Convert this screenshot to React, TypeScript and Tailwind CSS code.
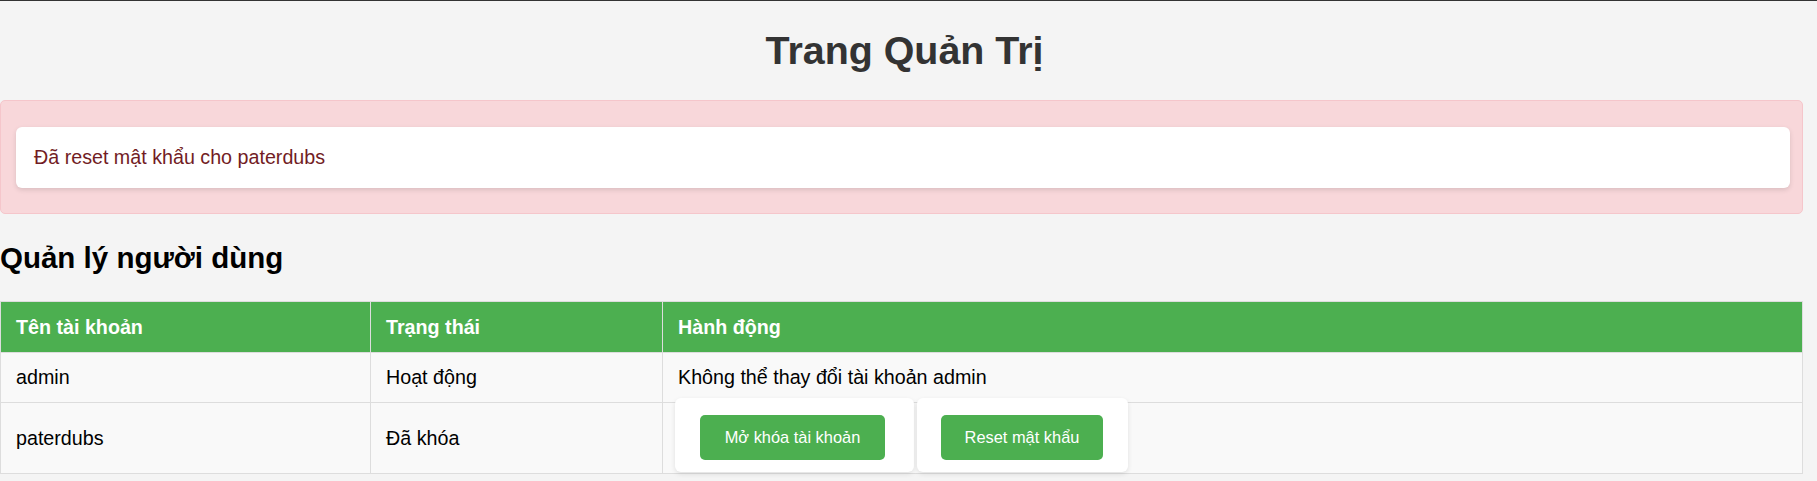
import React from "react";

const users = [
  { name: "admin", status: "Hoạt động", locked: false, isAdmin: true },
  { name: "paterdubs", status: "Đã khóa", locked: true, isAdmin: false },
];

const App: React.FC = () => {
  return (
    <div className="min-h-screen w-full bg-[#f4f4f4] border-t border-[#333] font-['Liberation_Sans',Arial,sans-serif]">
      <div className="w-[1803px]">
        <h1 className="pt-[26px] pl-[6px] text-center text-[39.4px] leading-[46px] font-bold text-[#333]">
          Trang Quản Trị
        </h1>

        <div className="mt-[27px] rounded-[5px] border border-[#f5c6cb] bg-[#f8d7da] pt-[26px] pb-[25px] pl-[15px] pr-[12px]">
          <div className="rounded-[6px] bg-white px-[18px] py-[19px] text-[19.7px] leading-[23px] text-[#721c24] shadow-[0_2px_5px_rgba(0,0,0,0.12)]">
            Đã reset mật khẩu cho paterdubs
          </div>
        </div>

        <h2 className="mt-[27px] text-[29.5px] leading-[34px] font-bold text-black">
          Quản lý người dùng
        </h2>

        <div className="mt-[26px] border-t border-l border-[#ddd] text-[19.7px] leading-[23px]">
          <div className="grid h-[51px] grid-cols-[370px_292px_1fr] grid-rows-[minmax(0,1fr)] border-b border-[#ddd] bg-[#4caf50] font-bold text-white">
            <div className="flex items-center border-r border-[#ddd] px-[15px]">Tên tài khoản</div>
            <div className="flex items-center border-r border-[#ddd] px-[15px]">Trạng thái</div>
            <div className="flex items-center border-r border-[#ddd] px-[15px]">Hành động</div>
          </div>

          {users.map((u) => (
            <div
              key={u.name}
              className={`grid grid-cols-[370px_292px_1fr] grid-rows-[minmax(0,1fr)] border-b border-[#ddd] bg-[#f9f9f9] text-black ${
                u.isAdmin ? "h-[50px]" : "h-[71px]"
              }`}
            >
              <div className="flex items-center border-r border-[#ddd] px-[15px]">{u.name}</div>
              <div className="flex items-center border-r border-[#ddd] px-[15px]">{u.status}</div>
              {u.isAdmin ? (
                <div className="flex items-center border-r border-[#ddd] px-[15px]">
                  Không thể thay đổi tài khoản admin
                </div>
              ) : (
                <div className="flex min-h-0 items-end gap-[3px] border-r border-[#ddd] pb-[1px] pl-[12px]">
                  <form className="h-[74px] w-[239px] shrink-0 rounded-[6px] bg-white pt-[17px] pl-[25px] shadow-[0_2px_5px_rgba(0,0,0,0.1)]">
                    <button
                      type="button"
                      className="h-[45px] w-[185px] rounded-[5px] bg-[#4caf50] text-center text-[16.4px] text-white"
                    >
                      Mở khóa tài khoản
                    </button>
                  </form>
                  <form className="h-[74px] w-[211px] shrink-0 rounded-[6px] bg-white pt-[17px] pl-[24px] shadow-[0_2px_5px_rgba(0,0,0,0.1)]">
                    <button
                      type="button"
                      className="h-[45px] w-[162px] rounded-[5px] bg-[#4caf50] text-center text-[16.4px] text-white"
                    >
                      Reset mật khẩu
                    </button>
                  </form>
                </div>
              )}
            </div>
          ))}
        </div>
      </div>
    </div>
  );
};

export default App;
